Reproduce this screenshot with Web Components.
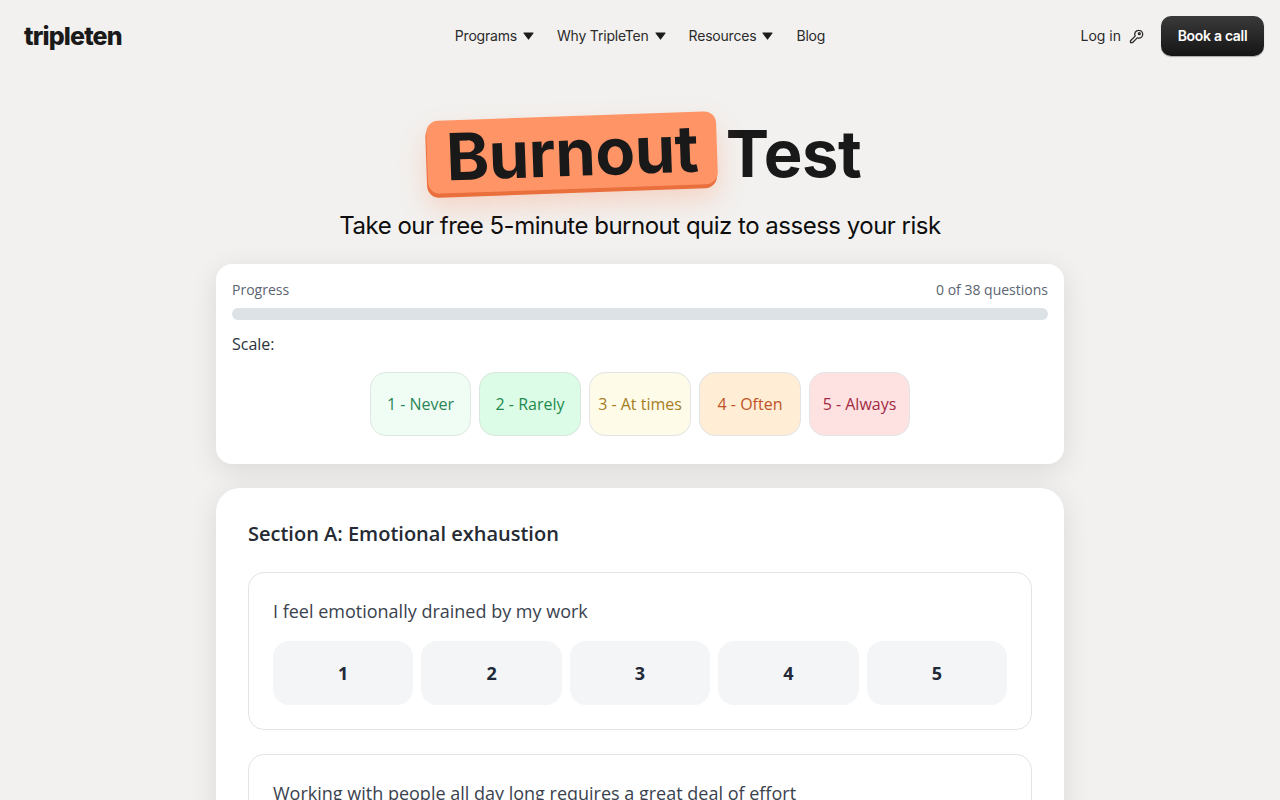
<!DOCTYPE html>
<html lang="en">
<head>
<meta charset="utf-8">
<title>Burnout Test</title>
<style>
  html, body { margin: 0; background: #f2f1ef; }
  body { font-family: "Open Sans", sans-serif; color: #1f2937; }
</style>
</head>
<body>
<site-header>
  <nav-link caret>Programs</nav-link>
  <nav-link caret>Why TripleTen</nav-link>
  <nav-link caret>Resources</nav-link>
  <nav-link>Blog</nav-link>
</site-header>
<page-hero sub="Take our free 5-minute burnout quiz to assess your risk">
  <span slot="badge">Burnout</span>
  Test
</page-hero>
<quiz-main>
  <progress-card answered="0" total="38">
    <scale-chip tone="never">1 - Never</scale-chip>
    <scale-chip tone="rarely">2 - Rarely</scale-chip>
    <scale-chip tone="times">3 - At times</scale-chip>
    <scale-chip tone="often">4 - Often</scale-chip>
    <scale-chip tone="always">5 - Always</scale-chip>
  </progress-card>
  <quiz-section heading="Section A: Emotional exhaustion">
    <quiz-question text="I feel emotionally drained by my work"></quiz-question>
    <quiz-question text="Working with people all day long requires a great deal of effort"></quiz-question>
  </quiz-section>
</quiz-main>

<script>
// Top bar with logo, centered nav and the login / call buttons.
const headerTemplate = document.createElement('template')
headerTemplate.innerHTML = `
  <style>
    :host {
      display: grid;
      grid-template-columns: 1fr auto 1fr;
      align-items: center;
      height: 72px;
      padding: 0 16px;
      font-family: Inter, sans-serif;
      color: #1c1c1c;
    }
    .logo {
      margin-left: 8px;
      font-size: 25px;
      font-weight: 800;
      letter-spacing: -0.85px;
      line-height: 24px;
      color: #1a1a1a;
    }
    nav {
      display: flex;
      gap: 23px;
    }
    .right {
      display: flex;
      justify-content: flex-end;
      align-items: center;
      gap: 17px;
    }
    .login {
      display: flex;
      align-items: center;
      gap: 8px;
      font-size: 14px;
      line-height: 20px;
      color: #2b2b2b;
    }
    button {
      width: 103px;
      height: 40px;
      padding: 0 0 2px;
      border: 0;
      border-radius: 10px;
      background: linear-gradient(#3a3a3a, #151515);
      box-shadow: 0 1px 1px rgba(0, 0, 0, 0.3);
      color: #fff;
      font: 600 14px Inter, sans-serif;
      letter-spacing: -0.3px;
    }
  </style>
  <div class="logo">tripleten</div>
  <nav><slot></slot></nav>
  <div class="right">
    <span class="login">Log in
      <svg width="15" height="15" viewBox="0 0 16 16" fill="none" stroke="#2b2b2b" stroke-width="1.4" stroke-linecap="round" stroke-linejoin="round">
        <path d="M10.4 1.4a4.2 4.2 0 0 1 0 8.4c-.6 0-1.1-.1-1.6-.3L3.6 14.6H1.6v-2l5-5a4.2 4.2 0 0 1 3.8-6.2z"/>
        <circle cx="11" cy="5" r="1"/>
      </svg>
    </span>
    <button>Book a call</button>
  </div>
`
customElements.define('site-header',
  class extends HTMLElement {
    constructor () {
      super()
      this.attachShadow({ mode: 'open' }).appendChild(headerTemplate.content.cloneNode(true))
    }
  })

const navLinkTemplate = document.createElement('template')
navLinkTemplate.innerHTML = `
  <style>
    :host {
      display: inline-flex;
      align-items: center;
      gap: 6px;
      font-size: 14px;
      letter-spacing: -0.2px;
      line-height: 20px;
      color: #2b2b2b;
    }
    svg { display: none; }
    :host([caret]) svg { display: block; }
  </style>
  <slot></slot>
  <svg width="11" height="8" viewBox="0 0 11 8"><path d="M1 1h9L5.5 7z" fill="#1c1c1c" stroke="#1c1c1c" stroke-width="1.2" stroke-linejoin="round"/></svg>
`
customElements.define('nav-link',
  class extends HTMLElement {
    constructor () {
      super()
      this.attachShadow({ mode: 'open' }).appendChild(navLinkTemplate.content.cloneNode(true))
    }
  })

const heroTemplate = document.createElement('template')
heroTemplate.innerHTML = `
  <style>
    :host {
      display: block;
      text-align: center;
      font-family: Inter, sans-serif;
    }
    h1 {
      display: flex;
      justify-content: center;
      align-items: center;
      gap: 9px;
      height: 138px;
      box-sizing: border-box;
      padding: 26px 0 0 8px;
      margin: 0;
      font-size: 65px;
      font-weight: 700;
      line-height: 76px;
      letter-spacing: -0.4px;
      color: #191919;
    }
    .badge {
      margin-top: -3px;
      padding: 0 19px;
      border-radius: 12px;
      background: #ff9466;
      box-shadow: -1px 4px 0 #e96f3c, 0 14px 28px rgba(255, 130, 80, 0.28);
      line-height: 73px;
      transform: rotate(-2deg);
    }
    p {
      margin: 0;
      font-size: 24px;
      letter-spacing: -0.5px;
      line-height: 32px;
      color: #0d0d0d;
    }
  </style>
  <h1><span class="badge"><slot name="badge"></slot></span><span><slot></slot></span></h1>
  <p></p>
`
customElements.define('page-hero',
  class extends HTMLElement {
    constructor () {
      super()
      this.attachShadow({ mode: 'open' }).appendChild(heroTemplate.content.cloneNode(true))
      this.shadowRoot.querySelector('p').textContent = this.getAttribute('sub')
    }
  })

const mainTemplate = document.createElement('template')
mainTemplate.innerHTML = `
  <style>
    :host {
      display: flex;
      flex-direction: column;
      gap: 24px;
      width: 848px;
      margin: 0 auto;
      padding: 22px 0 40px;
      font-family: "Open Sans", sans-serif;
    }
  </style>
  <slot></slot>
`
customElements.define('quiz-main',
  class extends HTMLElement {
    constructor () {
      super()
      this.attachShadow({ mode: 'open' }).appendChild(mainTemplate.content.cloneNode(true))
    }
  })

const progressTemplate = document.createElement('template')
progressTemplate.innerHTML = `
  <style>
    :host {
      display: block;
      padding: 16px 16px 28px;
      border-radius: 16px;
      background: #fff;
      box-shadow: 0 6px 28px rgba(0, 0, 0, 0.1);
    }
    .labels {
      display: flex;
      justify-content: space-between;
      font-size: 14px;
      line-height: 20px;
      color: #5b6472;
    }
    .bar {
      height: 12px;
      margin-top: 8px;
      border-radius: 6px;
      background: #dde2e6;
    }
    .scale {
      margin-top: 12px;
      font-size: 16px;
      line-height: 24px;
      color: #2b323c;
    }
    .chips {
      display: flex;
      justify-content: center;
      gap: 8px;
      margin-top: 16px;
    }
  </style>
  <div class="labels"><span>Progress</span><span class="count"></span></div>
  <div class="bar"></div>
  <div class="scale">Scale:</div>
  <div class="chips"><slot></slot></div>
`
customElements.define('progress-card',
  class extends HTMLElement {
    constructor () {
      super()
      this.attachShadow({ mode: 'open' }).appendChild(progressTemplate.content.cloneNode(true))
      this.shadowRoot.querySelector('.count').textContent =
        `${this.getAttribute('answered')} of ${this.getAttribute('total')} questions`
    }
  })

const chipTemplate = document.createElement('template')
chipTemplate.innerHTML = `
  <style>
    :host {
      display: flex;
      align-items: center;
      justify-content: center;
      box-sizing: border-box;
      width: 102px;
      height: 64px;
      border: 1px solid #e2e4e6;
      border-radius: 16px;
      font-size: 16px;
      white-space: nowrap;
    }
    :host([tone="never"]) { width: 101px; background: #f0fdf4; color: #2a8558; border-color: #dfe7e2; }
    :host([tone="rarely"]) { background: #dcfce7; color: #1f8a4d; border-color: #d8e6dc; }
    :host([tone="times"]) { background: #fefce8; color: #a67c1f; }
    :host([tone="often"]) { background: #ffedd5; color: #bf5326; }
    :host([tone="always"]) { width: 101px; background: #fee2e2; color: #a32a42; }
  </style>
  <slot></slot>
`
customElements.define('scale-chip',
  class extends HTMLElement {
    constructor () {
      super()
      this.attachShadow({ mode: 'open' }).appendChild(chipTemplate.content.cloneNode(true))
    }
  })

const sectionTemplate = document.createElement('template')
sectionTemplate.innerHTML = `
  <style>
    :host {
      display: block;
      padding: 32px;
      border-radius: 24px;
      background: #fff;
      box-shadow: 0 6px 28px rgba(0, 0, 0, 0.1);
    }
    h2 {
      margin: 0 0 24px;
      font-size: 20px;
      font-weight: 600;
      line-height: 28px;
      color: #252a33;
    }
    .list {
      display: flex;
      flex-direction: column;
      gap: 24px;
    }
  </style>
  <h2></h2>
  <div class="list"><slot></slot></div>
`
customElements.define('quiz-section',
  class extends HTMLElement {
    constructor () {
      super()
      this.attachShadow({ mode: 'open' }).appendChild(sectionTemplate.content.cloneNode(true))
      this.shadowRoot.querySelector('h2').textContent = this.getAttribute('heading')
    }
  })

const questionTemplate = document.createElement('template')
questionTemplate.innerHTML = `
  <style>
    :host {
      display: block;
      padding: 24px;
      border: 1px solid #e3e4e6;
      border-radius: 16px;
    }
    p {
      margin: 0 0 16px;
      font-size: 18px;
      line-height: 28px;
      color: #3a424e;
    }
    .answers {
      display: grid;
      grid-template-columns: repeat(5, 1fr);
      gap: 8px;
    }
    button {
      height: 64px;
      border: 0;
      border-radius: 16px;
      background: #f3f5f6;
      color: #1f2937;
      font: 700 18px "Open Sans", sans-serif;
    }
  </style>
  <p></p>
  <div class="answers"></div>
`
customElements.define('quiz-question',
  class extends HTMLElement {
    constructor () {
      super()
      this.attachShadow({ mode: 'open' }).appendChild(questionTemplate.content.cloneNode(true))
      this.shadowRoot.querySelector('p').textContent = this.getAttribute('text')
      const answers = this.shadowRoot.querySelector('.answers')
      for (let i = 1; i <= 5; i++) {
        const button = document.createElement('button')
        button.textContent = i
        answers.appendChild(button)
      }
    }
  })
</script>
</body>
</html>
